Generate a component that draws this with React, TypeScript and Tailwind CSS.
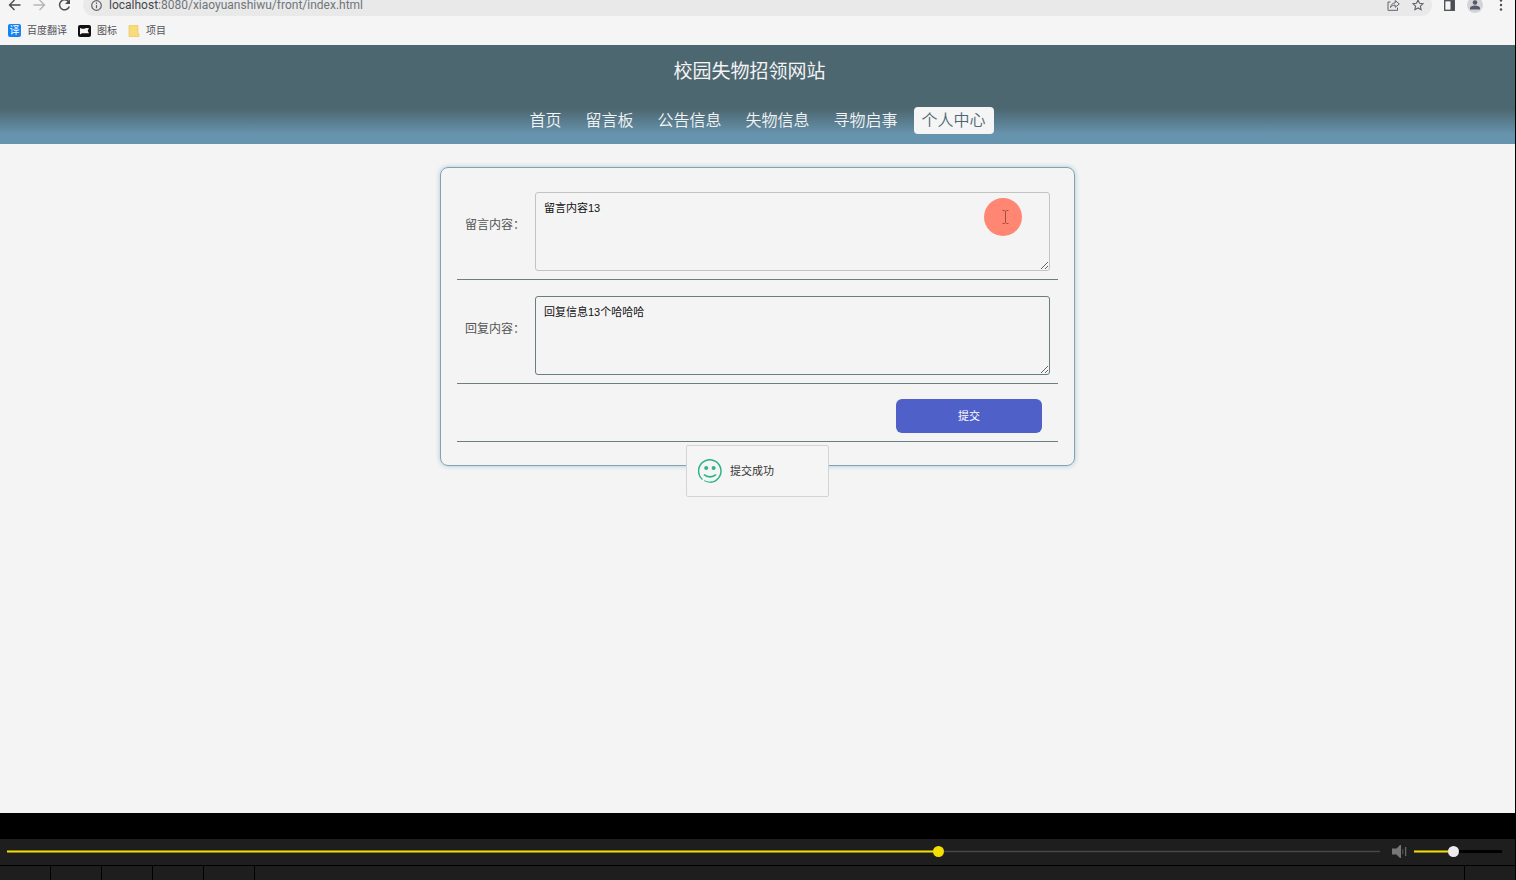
import { useState } from "react";
import type { ReactNode } from "react";
import clsx from "clsx";

const navItems = ["首页", "留言板", "公告信息", "失物信息", "寻物启事", "个人中心"];

function BrowserToolbar() {
  return (
    <div className="flex h-4 items-end overflow-hidden">
      <div className="flex h-[22px] w-full shrink-0 items-center pr-3 text-[#5f6368]">
        <button aria-label="后退" className="ml-2 text-[#4a4d51]">
          <svg width="13" height="12" viewBox="0 0 13 12" fill="none" stroke="currentColor" strokeWidth="1.4">
            <path d="M12.500 6H1.500M6.500 1L1.500 6l5 5" />
          </svg>
        </button>
        <button aria-label="前进" className="ml-3 text-[#b4b6b9]">
          <svg width="13" height="12" viewBox="0 0 13 12" fill="none" stroke="currentColor" strokeWidth="1.4">
            <path d="M.500 6h11M6.500 1l5 5-5 5" />
          </svg>
        </button>
        <button aria-label="刷新" className="ml-3 text-[#4a4d51]">
          <svg width="13" height="12" viewBox="0 0 13 12" fill="none" stroke="currentColor" strokeWidth="1.500">
            <path d="M10.700 3A5 5 0 1 0 11.300 7.500" />
            <path d="M12 0v5H7z" fill="currentColor" stroke="none" />
          </svg>
        </button>
        <div className="ml-3 flex h-full flex-1 items-center rounded-full bg-[#e9e9ea] px-2">
          <svg width="11" height="11" viewBox="0 0 11 11" fill="none" stroke="currentColor" strokeWidth="1.2">
            <circle cx="5.500" cy="5.500" r="4.800" />
            <path d="M5.500 5v3.200M5.500 2.600v1.300" />
          </svg>
          <span className="ml-[7px] flex-1 font-[Roboto,sans-serif] text-xs leading-[10px] text-[#70757a]">
            <span className="text-[#44474b]">localhost</span>:8080/xiaoyuanshiwu/front/index.html
          </span>
          <button aria-label="分享">
            <svg width="13" height="12" viewBox="0 0 13 12" fill="none" stroke="currentColor" strokeWidth="1">
              <path d="M3.500 3H1v8.300h9.500V8.500" />
              <path d="M3.500 8.500C4 5.500 5.600 4 8.200 3.900V1.500L12.300 5 8.200 8.300V6.100C6.200 6.100 4.800 6.800 3.500 8.500z" />
            </svg>
          </button>
          <button aria-label="收藏" className="ml-3">
            <svg width="12" height="12" viewBox="0 0 12 12" fill="none" stroke="currentColor" strokeWidth="1.100">
              <path d="M6 1l1.500 3.300 3.500.4-2.600 2.400.7 3.600L6 8.900l-3.100 1.800.7-3.600L1 4.700l3.500-.4z" />
            </svg>
          </button>
        </div>
        <button aria-label="侧边栏" className="ml-3 text-[#4a4d51]">
          <svg width="11" height="11" viewBox="0 0 11 11">
            <rect x=".7" y=".7" width="9.600" height="9.600" fill="none" stroke="currentColor" strokeWidth="1.300" />
            <rect x="6.500" y="1" width="3.500" height="9" fill="currentColor" />
          </svg>
        </button>
        <button aria-label="用户" className="ml-3 flex size-4 items-center justify-center rounded-full bg-[#d3d4d8] text-[#565a66]">
          <svg width="10" height="10" viewBox="0 0 10 10" fill="currentColor">
            <circle cx="5" cy="2.500" r="2.300" />
            <path d="M0 9.500V8c0-1.500 2.500-2.400 5-2.400S10 6.500 10 8v1.500z" />
          </svg>
        </button>
        <button aria-label="更多" className="ml-4 text-[#4a4d51]">
          <svg width="4" height="12" viewBox="0 0 4 12" fill="currentColor">
            <circle cx="2" cy="1.500" r="1.200" />
            <circle cx="2" cy="6" r="1.200" />
            <circle cx="2" cy="10.500" r="1.200" />
          </svg>
        </button>
      </div>
    </div>
  );
}

function Bookmark({ icon, label }: { icon: ReactNode; label: string }) {
  return (
    <a href="#" className="flex items-center gap-1.5 text-[10px] text-[#505357]">
      {icon}
      {label}
    </a>
  );
}

function BookmarkBar() {
  return (
    <div className="flex h-[29px] items-center gap-[11px] px-2">
      <Bookmark
        label="百度翻译"
        icon={
          <span className="flex size-[13px] items-center justify-center rounded-xs bg-[#1481f5] text-[10px] leading-none text-white">
            译
          </span>
        }
      />
      <Bookmark
        label="图标"
        icon={
          <svg width="13" height="12" viewBox="0 0 13 12">
            <rect width="13" height="12" rx="2" fill="#111" />
            <path d="M2 9.500V3l2 .8h2.500L8 3l3 .2-1.300 2.600L11 8.300H4z" fill="#f5f5f5" />
          </svg>
        }
      />
      <Bookmark
        label="项目"
        icon={
          <svg width="12" height="12" viewBox="0 0 12 12">
            <path d="M1 .5h9V9h1v2.500H1z" fill="#f8dc7c" stroke="#e9c75c" strokeWidth=".7" />
          </svg>
        }
      />
    </div>
  );
}

function SiteHeader() {
  return (
    <header className="h-[99px] bg-linear-to-b from-[#4d6770] from-64% to-[#6693ad] to-90% text-[#f4f4f4]">
      <h1 className="pt-[13px] pr-4 text-center text-[19px] leading-7">校园失物招领网站</h1>
      <nav className="mt-[21px] flex justify-center gap-2 font-[350]">
        {navItems.map((item) => (
          <a
            key={item}
            href="#"
            className={clsx(
              "rounded-sm px-2 text-base leading-[27px]",
              item === "个人中心" && "bg-[#f5f5f5] text-[#4d6770]"
            )}
          >
            {item}
          </a>
        ))}
      </nav>
    </header>
  );
}

type FieldProps = {
  id: string;
  label: string;
  value: string;
  focused?: boolean;
  onChange: (value: string) => void;
  children?: ReactNode;
};

function Field({ id, label, value, focused, onChange, children }: FieldProps) {
  return (
    <div className="flex border-b border-[#6c7e80] px-2 pt-4 pb-2">
      <label htmlFor={id} className="w-[70px] shrink-0 pt-[25px] text-xs leading-4 text-[#555]">
        {label}：
      </label>
      <div className="relative flex-1">
        <textarea
          id={id}
          value={value}
          onChange={(e) => onChange(e.target.value)}
          className={clsx(
            "block h-[79px] w-full resize rounded-[3px] border px-2 py-[7px] text-[11px] leading-4 text-[#111] outline-none",
            focused ? "border-[#667f80]" : "border-[#c2c4c4]"
          )}
        />
        {children}
      </div>
    </div>
  );
}

function ClickMarker() {
  return (
    <div className="pointer-events-none absolute top-1.5 right-7 flex size-[38px] items-center justify-center rounded-full bg-[#ff8673] pl-1">
      <svg width="7" height="14" viewBox="0 0 7 14" fill="none" stroke="#a84a3e" strokeWidth="1">
        <path d="M.5.500h2l1 .8 1-.8h2M3.500 1v12M.5 13.500h2l1-.8 1 .8h2" />
      </svg>
    </div>
  );
}

function SuccessMessage() {
  return (
    <div className="absolute inset-x-0 top-[45%] flex justify-center">
      <div
        role="status"
        className="flex h-[52px] w-[143px] items-center gap-2 rounded-xs border border-[#d3d4d5] bg-[#f5f5f5] pl-[11px] text-[11px] text-[#333]"
      >
        <svg width="24" height="24" viewBox="0 0 24 24" fill="none" stroke="#2bb584">
          <path d="M4.500 20.500A11.200 11.200 0 1 1 12 23.200" strokeWidth="1.500" />
          <path d="M12 23.200A11.200 11.200 0 0 1 6.200 21.600" strokeWidth="1" />
          <path d="M6 15.500c3 3.200 9 3.200 12 0" strokeWidth="1.800" />
          <circle cx="8.200" cy="9" r="2" fill="#2bb584" stroke="none" />
          <circle cx="15.600" cy="9" r="2" fill="#2bb584" stroke="none" />
        </svg>
        提交成功
      </div>
    </div>
  );
}

type BarProps = {
  label: string;
  value: number;
  className: string;
  onChange: (value: number) => void;
};

function RangeBar({ label, value, className, onChange }: BarProps) {
  return (
    <input
      type="range"
      aria-label={label}
      min={0}
      max={1000}
      value={value}
      onChange={(e) => onChange(Number(e.target.value))}
      className={clsx(
        "h-[11px] appearance-none bg-no-repeat bg-left [&::-webkit-slider-thumb]:size-[11px] [&::-webkit-slider-thumb]:appearance-none [&::-webkit-slider-thumb]:rounded-full",
        className
      )}
      style={{ backgroundSize: `${value / 10}% 3px, 100% 3px` }}
    />
  );
}

function Player() {
  const [position, setPosition] = useState(680);
  const [volume, setVolume] = useState(440);

  return (
    <footer className="shrink-0 bg-black pt-[26px]">
      <div className="flex h-[26px] items-center bg-[#1e1e1e] pr-[13px] pb-px pl-[7px]">
        <RangeBar
          label="进度"
          value={position}
          onChange={setPosition}
          className="min-w-0 flex-1 bg-[linear-gradient(#8e8110_1px,#f5dd06_1px,#f5dd06_2px,#8e8110_2px),linear-gradient(#262626_1px,#484848_1px,#484848_2px,#262626_2px)] [&::-webkit-slider-thumb]:bg-[#f5dd06]"
        />
        <button aria-label="静音" className="ml-3">
          <svg width="15" height="13" viewBox="0 0 15 13" fill="#777">
            <path d="M0 3.500h4.500L8 0h1v13H8L4.500 9.500H0z" />
            <path d="M10.300 4h1v5h-1z" fill="#555" />
            <path d="M13.200 2h1v9h-1z" />
          </svg>
        </button>
        <RangeBar
          label="音量"
          value={volume}
          onChange={setVolume}
          className="ml-[7px] w-[88px] bg-[linear-gradient(#8e8110_1px,#f5dd06_1px,#f5dd06_2px,#8e8110_2px),linear-gradient(#000,#000)] [&::-webkit-slider-thumb]:bg-[#ececec]"
        />
      </div>
      <div className="mt-px flex h-[14px] gap-px">
        {[0, 1, 2, 3, 4].map((n) => (
          <div key={n} className="w-[50px] bg-[#1e1e1e]" />
        ))}
        <div className="flex-1 bg-[#1e1e1e]" />
        <div className="w-[50px] bg-[#1e1e1e]" />
      </div>
    </footer>
  );
}

export default function App() {
  const [message, setMessage] = useState("留言内容13");
  const [reply, setReply] = useState("回复信息13个哈哈哈");

  return (
    <div className="flex min-h-screen flex-col border-r border-black bg-[#f4f4f4] font-['Liberation_Sans','Noto_Sans_CJK_SC',sans-serif]">
      <div className="bg-[#f6f5f6]">
        <BrowserToolbar />
        <BookmarkBar />
      </div>
      <SiteHeader />
      <main className="relative flex-1 px-4 pt-[23px]">
        <form
          onSubmit={(e) => e.preventDefault()}
          className="mx-auto max-w-[635px] rounded-lg border border-[#7ea3b3] px-4 pt-2 pb-[23px] shadow-[0_0_5px_#a9c6d4]"
        >
          <Field id="message" label="留言内容" value={message} onChange={setMessage}>
            <ClickMarker />
          </Field>
          <Field id="reply" label="回复内容" value={reply} onChange={setReply} focused />
          <div className="flex justify-end border-b border-[#6c7e80] px-4 pt-[15px] pb-2">
            <button type="submit" className="h-[34px] w-[146px] rounded-md bg-[#4f60c9] text-[11px] text-white">
              提交
            </button>
          </div>
        </form>
        <SuccessMessage />
      </main>
      <Player />
    </div>
  );
}
